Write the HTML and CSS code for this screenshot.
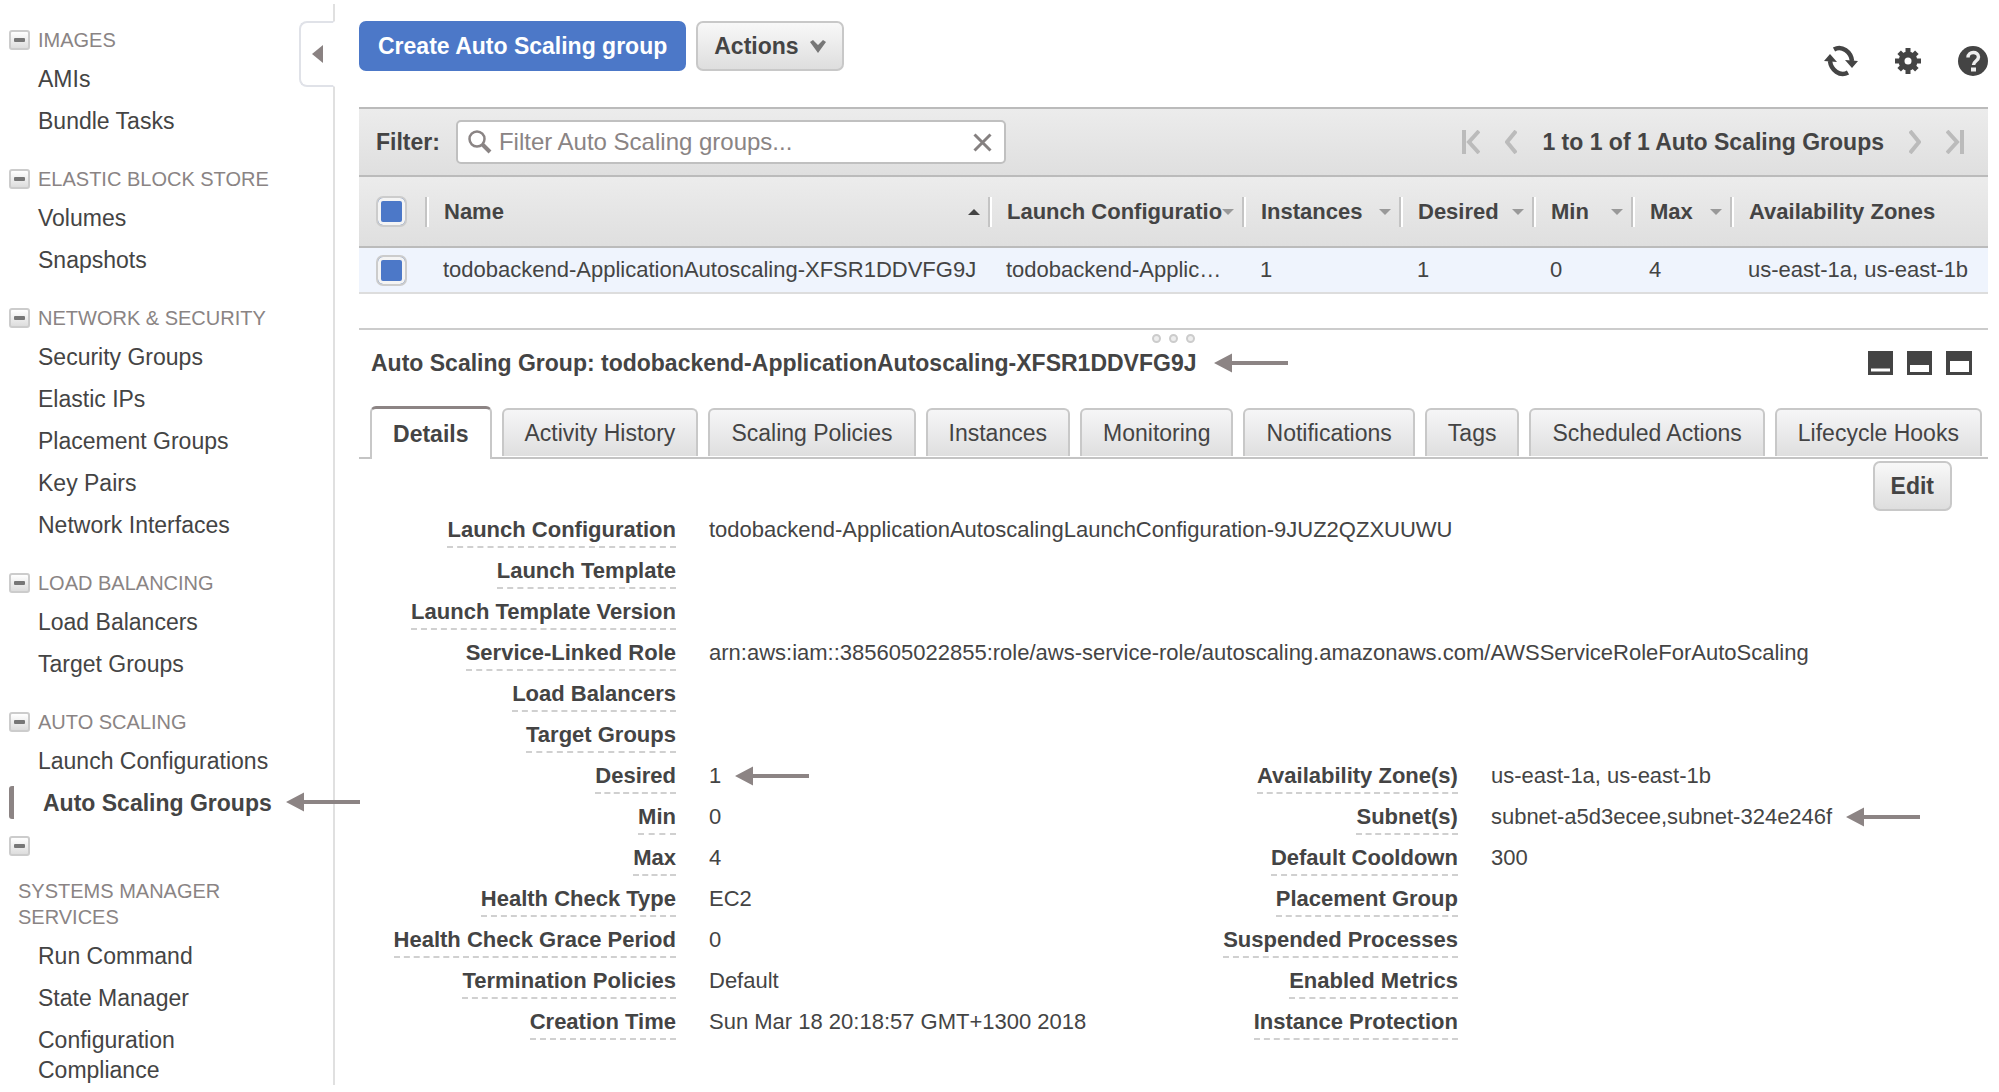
FILE: index.html
```html
<!DOCTYPE html>
<html lang="en">
<head>
<meta charset="utf-8">
<title>Auto Scaling Groups</title>
<link rel="stylesheet" href="styles.css">
</head>
<body>
<svg class="defs" aria-hidden="true">
  <symbol id="arrow" viewBox="0 0 74 20"><path d="M0 10 18 0.500V8H74V12H18V19.500Z"/></symbol>
</svg>
<div class="layout">
  <nav class="sidebar" aria-label="Services">
    <button class="handle" aria-label="Collapse sidebar"><svg width="11" height="18" viewBox="0 0 11 18"><path d="M0 9 11 0V18Z" fill="#8a8282"/></svg></button>
    <section class="group">
      <h2><button class="fold" aria-label="Collapse Images"></button>IMAGES</h2>
      <a href="#">AMIs</a>
      <a href="#">Bundle Tasks</a>
    </section>
    <section class="group">
      <h2><button class="fold" aria-label="Collapse Elastic Block Store"></button>ELASTIC BLOCK STORE</h2>
      <a href="#">Volumes</a>
      <a href="#">Snapshots</a>
    </section>
    <section class="group">
      <h2><button class="fold" aria-label="Collapse Network and Security"></button>NETWORK &amp; SECURITY</h2>
      <a href="#">Security Groups</a>
      <a href="#">Elastic IPs</a>
      <a href="#">Placement Groups</a>
      <a href="#">Key Pairs</a>
      <a href="#">Network Interfaces</a>
    </section>
    <section class="group">
      <h2><button class="fold" aria-label="Collapse Load Balancing"></button>LOAD BALANCING</h2>
      <a href="#">Load Balancers</a>
      <a href="#">Target Groups</a>
    </section>
    <section class="group last">
      <h2><button class="fold" aria-label="Collapse Auto Scaling"></button>AUTO SCALING</h2>
      <a href="#">Launch Configurations</a>
      <a href="#" class="current">Auto Scaling Groups<svg class="arrow side-arrow"><use href="#arrow"/></svg></a>
    </section>
    <section class="group systems">
      <button class="fold" aria-label="Collapse Systems Manager Services"></button>
      <h2>SYSTEMS MANAGER SERVICES</h2>
      <a href="#">Run Command</a>
      <a href="#">State Manager</a>
      <a href="#">Configuration Compliance</a>
    </section>
  </nav>

  <main class="main">
    <header class="toolbar">
      <button class="btn primary">Create Auto Scaling group</button>
      <button class="btn">Actions <svg width="16" height="13" viewBox="0 0 16 13"><path d="M0 2 3 0 8 5 13 0 16 2 8 13Z" fill="#777"/></svg></button>
      <div class="tools">
        <button class="icon" aria-label="Refresh"><svg width="34" height="32" viewBox="0 0 34 32"><path d="M10 4.500C18 0 27 7 28 16M24 27.500C16 32 7 25 6 16" fill="none" stroke="#444" stroke-width="4.500"/><path d="M21 15 34 16 28 23ZM0 16 13 17 6 9Z" fill="#444"/></svg></button>
        <button class="icon" aria-label="Preferences"><svg width="26" height="26" viewBox="-13 -13 26 26"><g fill="#444"><circle r="9.500"/><path d="M-2.500-13H2.500V13H-2.500Z"/><path d="M-2.500-12.500H2.500V12.500H-2.500Z" transform="rotate(45)"/><path d="M-2.500-13H2.500V13H-2.500Z" transform="rotate(90)"/><path d="M-2.500-12.500H2.500V12.500H-2.500Z" transform="rotate(135)"/></g><circle r="3.500" fill="#fff"/></svg></button>
        <button class="icon" aria-label="Help"><svg width="30" height="30" viewBox="0 0 30 30"><circle cx="15" cy="15" r="15" fill="#444"/><path d="M10 11.500C10 5 20.500 5 20.500 11 20.500 15 15.500 15 15.500 19" fill="none" stroke="#eee" stroke-width="3.500"/><path d="M13 21.500H18V25.500H13Z" fill="#eee"/></svg></button>
      </div>
    </header>

    <div class="filterbar">
      <label for="filter">Filter:</label>
      <div class="search">
        <svg width="24" height="24" viewBox="0 0 24 24" fill="none" stroke="#8a8484"><circle cx="9" cy="9" r="7.500" stroke-width="2.500"/><path d="M14.500 14.500 22 22" stroke-width="4"/></svg>
        <input id="filter" type="text" placeholder="Filter Auto Scaling groups...">
        <button class="icon" aria-label="Clear filter"><svg width="19" height="19" viewBox="0 0 19 19"><path d="M1.500 1.500 17.500 17.500M17.500 1.500 1.500 17.500" stroke="#858080" stroke-width="3"/></svg></button>
      </div>
      <div class="pager">
        <button class="icon" aria-label="First page"><svg width="18" height="24" viewBox="0 0 18 24" fill="none" stroke="#bbb" stroke-width="4"><path d="M2 0V24M17 1 7 12 17 23"/></svg></button>
        <button class="icon" aria-label="Previous page"><svg width="12" height="24" viewBox="0 0 12 24" fill="none" stroke="#bbb" stroke-width="4"><path d="M11 1 2 12 11 23"/></svg></button>
        <span>1 to 1 of 1 Auto Scaling Groups</span>
        <button class="icon" aria-label="Next page"><svg width="12" height="24" viewBox="0 0 12 24" fill="none" stroke="#bbb" stroke-width="4"><path d="M1 1 10 12 1 23"/></svg></button>
        <button class="icon" aria-label="Last page"><svg width="18" height="24" viewBox="0 0 18 24" fill="none" stroke="#bbb" stroke-width="4"><path d="M16 0V24M1 1 11 12 1 23"/></svg></button>
      </div>
    </div>

    <table class="groups">
      <colgroup><col class="c-check"><col class="c-name"><col class="c-launch"><col class="c-inst"><col class="c-desired"><col class="c-num"><col class="c-num"><col class="c-zones"></colgroup>
      <thead>
        <tr>
          <th><input type="checkbox" checked aria-label="Select all"></th>
          <th><div class="head">Name<i class="sort up"></i></div></th>
          <th><div class="head">Launch Configuratio<i class="sort"></i></div></th>
          <th><div class="head">Instances<i class="sort"></i></div></th>
          <th><div class="head">Desired<i class="sort"></i></div></th>
          <th><div class="head">Min<i class="sort"></i></div></th>
          <th><div class="head">Max<i class="sort"></i></div></th>
          <th><div class="head">Availability Zones</div></th>
        </tr>
      </thead>
      <tbody>
        <tr>
          <td><input type="checkbox" checked aria-label="Select group"></td>
          <td>todobackend-ApplicationAutoscaling-XFSR1DDVFG9J</td>
          <td>todobackend-Applic…</td>
          <td>1</td>
          <td>1</td>
          <td>0</td>
          <td>4</td>
          <td>us-east-1a, us-east-1b</td>
        </tr>
      </tbody>
    </table>

    <section class="pane">
      <div class="grip"><i></i><i></i><i></i></div>
      <div class="titlebar">
        <h1>Auto Scaling Group: todobackend-ApplicationAutoscaling-XFSR1DDVFG9J</h1>
        <svg class="arrow"><use href="#arrow"/></svg>
        <div class="sizes">
          <button class="icon" aria-label="Minimize pane"><svg width="25" height="24" viewBox="0 0 25 24"><path d="M0 0H25V24H0Z" fill="#444"/><path d="M3 17.500H22V20.500H3Z" fill="#fff"/></svg></button>
          <button class="icon" aria-label="Split pane"><svg width="25" height="24" viewBox="0 0 25 24"><path d="M0 0H25V24H0Z" fill="#444"/><path d="M3 14H22V21H3Z" fill="#fff"/></svg></button>
          <button class="icon" aria-label="Maximize pane"><svg width="26" height="24" viewBox="0 0 26 24"><path d="M0 0H26V24H0Z" fill="#444"/><path d="M4 10H23V21H4Z" fill="#fff"/></svg></button>
        </div>
      </div>
      <div class="tabs" role="tablist">
        <button class="tab active" role="tab" aria-selected="true">Details</button>
        <button class="tab" role="tab">Activity History</button>
        <button class="tab" role="tab">Scaling Policies</button>
        <button class="tab" role="tab">Instances</button>
        <button class="tab" role="tab">Monitoring</button>
        <button class="tab" role="tab">Notifications</button>
        <button class="tab" role="tab">Tags</button>
        <button class="tab" role="tab">Scheduled Actions</button>
        <button class="tab" role="tab">Lifecycle Hooks</button>
      </div>
      <div class="edit"><button class="btn">Edit</button></div>
      <dl class="details">
        <dt><span>Launch Configuration</span></dt><dd>todobackend-ApplicationAutoscalingLaunchConfiguration-9JUZ2QZXUUWU</dd>
        <dt><span>Launch Template</span></dt><dd></dd>
        <dt><span>Launch Template Version</span></dt><dd></dd>
        <dt><span>Service-Linked Role</span></dt><dd>arn:aws:iam::385605022855:role/aws-service-role/autoscaling.amazonaws.com/AWSServiceRoleForAutoScaling</dd>
        <dt><span>Load Balancers</span></dt><dd></dd>
        <dt><span>Target Groups</span></dt><dd></dd>
      </dl>
      <div class="columns">
        <dl class="details">
          <dt><span>Desired</span></dt><dd>1<svg class="arrow"><use href="#arrow"/></svg></dd>
          <dt><span>Min</span></dt><dd>0</dd>
          <dt><span>Max</span></dt><dd>4</dd>
          <dt><span>Health Check Type</span></dt><dd>EC2</dd>
          <dt><span>Health Check Grace Period</span></dt><dd>0</dd>
          <dt><span>Termination Policies</span></dt><dd>Default</dd>
          <dt><span>Creation Time</span></dt><dd>Sun Mar 18 20:18:57 GMT+1300 2018</dd>
        </dl>
        <dl class="details">
          <dt><span>Availability Zone(s)</span></dt><dd>us-east-1a, us-east-1b</dd>
          <dt><span>Subnet(s)</span></dt><dd>subnet-a5d3ecee,subnet-324e246f<svg class="arrow"><use href="#arrow"/></svg></dd>
          <dt><span>Default Cooldown</span></dt><dd>300</dd>
          <dt><span>Placement Group</span></dt><dd></dd>
          <dt><span>Suspended Processes</span></dt><dd></dd>
          <dt><span>Enabled Metrics</span></dt><dd></dd>
          <dt><span>Instance Protection</span></dt><dd></dd>
        </dl>
      </div>
    </section>
  </main>
</div>
</body>
</html>
```

FILE: styles.css
```css
* { box-sizing: border-box; }
body {
  margin: 0;
  background: #fff;
  color: #444;
  font: 22px/28px "Liberation Sans", Arial, sans-serif;
}
button, input { font: inherit; color: inherit; }
button { cursor: pointer; }
svg { flex: none; display: block; }
.defs { position: absolute; width: 0; height: 0; }
.icon { display: flex; padding: 0; border: 0; background: none; }
.arrow { width: 74px; height: 20px; fill: #8c8484; }

.layout { display: flex; align-items: stretch; padding: 4px 11px 7px 0; }

/* Sidebar */
.sidebar {
  position: relative;
  flex: none;
  width: 335px;
  padding: 16px 60px 0 9px;
  border-right: 2px solid #e0e0e0;
}
.handle {
  position: absolute;
  top: 17px;
  right: -2px;
  width: 36px;
  height: 66px;
  display: flex;
  align-items: center;
  justify-content: center;
  border: 2px solid #e0e2e8;
  border-right-color: #fff;
  border-radius: 8px 0 0 8px;
  background: #fff;
}
.group { margin-bottom: 17px; }
.group.last { margin-bottom: 0; }
.group h2 {
  display: flex;
  align-items: center;
  gap: 8px;
  height: 38px;
  margin: 0;
  padding-top: 2px;
  font-size: 20px;
  font-weight: 400;
  color: #8a8484;
}
.fold {
  flex: none;
  display: flex;
  align-items: center;
  justify-content: center;
  width: 21px;
  height: 20px;
  padding: 0;
  border: 2px solid #ccc;
  border-radius: 3px;
  background: linear-gradient(#fff, #ddd);
}
.fold::before { content: ""; width: 11px; height: 4px; border-radius: 1px; background: #777; }
.group a {
  display: block;
  padding: 6px 0 6px 29px;
  font-size: 23px;
  line-height: 30px;
  color: inherit;
  text-decoration: none;
}
.group a.current {
  position: relative;
  padding-left: 34px;
  font-weight: 700;
  white-space: nowrap;
}
.current::before {
  content: "";
  position: absolute;
  left: 0;
  top: 4px;
  width: 5px;
  height: 33px;
  border-radius: 3px 0 0 3px;
  background: #8c8484;
}
.side-arrow { position: absolute; left: 277px; top: 10px; }
.group.systems { margin: 12px 0 0; }
.group.systems h2 {
  height: auto;
  margin: 20px 0 5px;
  padding: 2px 50px 0 9px;
  line-height: 26px;
}
.systems a:last-child { padding-bottom: 0; }

/* Toolbar */
.main { flex: 1; min-width: 0; padding: 17px 0 0 24px; }
.toolbar { display: flex; align-items: flex-start; gap: 10px; }
.btn {
  display: flex;
  align-items: center;
  gap: 11px;
  height: 50px;
  padding: 0 16px;
  border: 2px solid #c8c8c8;
  border-radius: 7px;
  background: linear-gradient(#f8f8f8, #dedede);
  font-size: 23px;
  font-weight: 700;
}
.btn.primary { padding: 0 17px; border-color: #4c78c8; background: #4c78c8; color: #fff; }
.tools { display: flex; align-items: center; gap: 37px; margin: 24px 0 0 auto; }

/* Filter bar */
.filterbar {
  display: flex;
  align-items: center;
  height: 70px;
  margin-top: 30px;
  padding: 0 24px 0 17px;
  border: solid #bbb;
  border-width: 2px 0;
  background: linear-gradient(#ececec, #dfdfdf);
  font-size: 23px;
  font-weight: 700;
}
.search {
  display: flex;
  align-items: center;
  gap: 7px;
  width: 550px;
  height: 44px;
  margin-left: 16px;
  padding: 0 12px 0 10px;
  border: 2px solid #c0c0c0;
  border-radius: 5px;
  background: #fff;
}
.search input { flex: 1; min-width: 0; padding: 0; border: 0; outline: 0; background: none; font-size: 24px; font-weight: 400; }
.search input::placeholder { color: #8a8484; opacity: 1; }
.pager { display: flex; align-items: center; gap: 25px; margin-left: auto; }

/* Table of groups */
.groups { width: 100%; border-collapse: collapse; table-layout: fixed; text-align: left; }
.c-check { width: 66px; }
.c-name { width: 563px; }
.c-launch { width: 254px; }
.c-inst { width: 157px; }
.c-desired { width: 133px; }
.c-num { width: 99px; }
.groups th {
  height: 70px;
  padding: 0;
  border-bottom: 2px solid #bbb;
  background: linear-gradient(#ececec, #dfdfdf);
}
.head {
  display: flex;
  align-items: center;
  justify-content: space-between;
  height: 30px;
  padding: 0 8px 0 17px;
  border-left: 2px solid #c4c4c4;
  box-shadow: inset 2px 0 #fff;
  white-space: nowrap;
}
.sort { flex: none; border: 6px solid transparent; border-top: 6px solid #999; border-bottom: 0; }
.sort.up { border-top: 0; border-bottom: 6px solid #444; }
.groups td {
  height: 46px;
  padding: 0 0 0 18px;
  border-bottom: 2px solid #ddd;
  background: #eff4fd;
  white-space: nowrap;
}
.groups th:first-child, .groups td:first-child { padding-left: 17px; }
.groups input {
  appearance: none;
  display: block;
  width: 31px;
  height: 31px;
  margin: 0;
  border: 2px solid #ccc;
  border-radius: 7px;
  background: #4c78c8;
  box-shadow: inset 0 0 0 3px #f4f4f4;
}

/* Detail pane */
.pane { margin-top: 34px; border-top: 2px solid #ccc; }
.grip { display: flex; justify-content: center; gap: 8px; padding: 4px 0 1px; }
.grip i { width: 9px; height: 9px; border: 2px solid #ccc; border-radius: 50%; background: #eee; }
.titlebar { display: flex; align-items: center; gap: 18px; height: 38px; padding: 0 16px 0 12px; }
.titlebar h1 { margin: 0; font-size: 23px; white-space: nowrap; }
.sizes { display: flex; gap: 14px; margin-left: auto; }
.tabs {
  display: flex;
  align-items: flex-end;
  gap: 10px;
  height: 52px;
  margin-top: 25px;
  padding: 0 6px 0 11px;
  border-bottom: 2px solid #c4c4c4;
}
.tab {
  flex: 1 1 auto;
  height: 48px;
  margin-bottom: 1px;
  padding: 0;
  border: 2px solid #c8c8c8;
  border-bottom: 0;
  border-radius: 6px 6px 0 0;
  background: linear-gradient(#f6f6f7, #dfdfdf);
  font-size: 23px;
  white-space: nowrap;
}
.tab.active {
  height: 53px;
  margin-bottom: -2px;
  border-top: 3px solid #8c8484;
  background: #fff;
  font-weight: 700;
}
.edit { display: flex; justify-content: flex-end; padding: 2px 36px 1px 0; }
.details {
  display: grid;
  grid-template-columns: 317px 1fr;
  grid-auto-rows: 41px;
  column-gap: 33px;
  margin: 0;
}
.details dt { text-align: right; font-weight: 700; white-space: nowrap; }
.details dt span { display: inline-block; height: 36px; line-height: 36px; border-bottom: 2px dashed #d0d0d0; }
.details dd { display: flex; align-items: center; gap: 14px; height: 36px; margin: 0; white-space: nowrap; }
.columns { display: grid; grid-template-columns: 48% 52%; }
```
